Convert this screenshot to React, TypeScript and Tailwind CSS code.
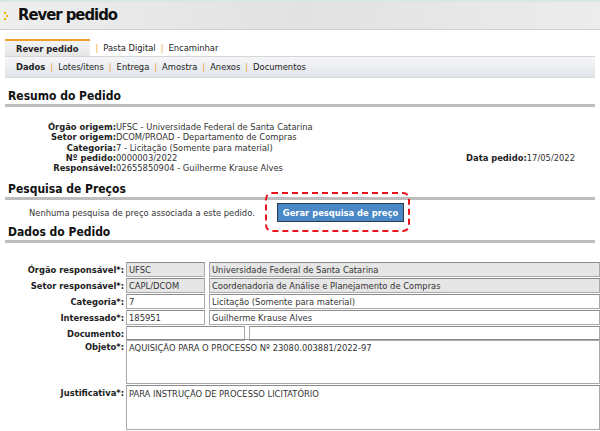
import { ReactNode } from "react";

const font = {
  fontFamily: '"DejaVu Sans Condensed", "DejaVu Sans", Verdana, sans-serif',
  fontStretch: "condensed",
};

const Sep = () => <span className="px-[5px] text-[#f0a030]">|</span>;

const SectionTitle = ({ children }: { children: ReactNode }) => (
  <div className="mx-[5px] border-b-[3px] border-[#bdbdbd] pl-[3px] text-[12px] font-bold leading-[16px] text-[#111]">
    {children}
  </div>
);

const SummaryRow = ({ label, value, extra }: { label: string; value: string; extra?: ReactNode }) => (
  <div className="flex h-[10.3px] items-center leading-[10.3px]">
    <span className="w-[116px] shrink-0 text-right font-bold text-[#222]">{label}:</span>
    <span className="text-[#333]">{value}</span>
    {extra}
  </div>
);

const Field = ({ value, gray, className }: { value?: string; gray?: boolean; className?: string }) => (
  <div
    className={
      "h-[15px] border border-[#a9a9a9] border-t-[#8a8a8a] pl-[2px] leading-[13px] text-[#333] " +
      (gray ? "bg-[#e6e6e6] " : "bg-white ") +
      (className ?? "")
    }
  >
    {value}
  </div>
);

const FormRow = ({ label, children, h = "h-[16px]" }: { label: string; children: ReactNode; h?: string }) => (
  <div className={"flex items-start " + h}>
    <span className="w-[124px] shrink-0 pt-[1px] text-right font-bold text-[#222]">{label}</span>
    <div className="flex flex-1 gap-[4px] pl-[2px]">{children}</div>
  </div>
);

export default function App() {
  return (
    <div className="relative h-[431px] w-[600px] overflow-hidden bg-white text-[9.3px]" style={font}>
      {/* header */}
      <div className="flex h-[30px] items-center border-t-2 border-b border-t-[#d6e9e2] border-b-[#cfcfcf] bg-gradient-to-r from-[#eeeeee] via-[#e2e2e2] to-[#ececec]">
        <svg width="6" height="8" viewBox="0 0 6 8" className="ml-[4px] mr-[8px]">
          <rect x="0" y="0" width="2" height="2" fill="#f0b400" />
          <rect x="2" y="3" width="2" height="2" fill="#f0b400" />
          <rect x="0" y="6" width="2" height="2" fill="#f0b400" />
        </svg>
        <span className="text-[16.5px] font-bold tracking-[-1px] text-[#111]">Rever pedido</span>
      </div>

      {/* tabs */}
      <div className="mt-[9px] flex h-[17px] items-end pl-[5px] text-[#222]">
        <div className="flex h-[17px] items-center border-t-2 border-[#f0a030] bg-gradient-to-b from-[#f4f4f4] to-[#e6e6e6] px-[11px] font-bold">
          Rever pedido
        </div>
        <div className="flex h-[17px] items-center pl-[1px]">
          <Sep />
          Pasta Digital
          <Sep />
          Encaminhar
        </div>
      </div>
      <div className="mx-[5px] flex h-[22px] items-center border-y border-[#d5d5d5] bg-gradient-to-b from-[#f5f6f8] to-[#e1e5e9] pl-[11px] text-[#222]">
        <span className="font-bold">Dados</span>
        <Sep />
        Lotes/itens
        <Sep />
        Entrega
        <Sep />
        Amostra
        <Sep />
        Anexos
        <Sep />
        Documentos
      </div>

      {/* resumo */}
      <div className="mt-[10px]">
        <SectionTitle>Resumo do Pedido</SectionTitle>
      </div>
      <div className="mt-[15px] flex flex-col">
        <SummaryRow label="Órgão origem" value="UFSC - Universidade Federal de Santa Catarina" />
        <SummaryRow label="Setor origem" value="DCOM/PROAD - Departamento de Compras" />
        <SummaryRow label="Categoria" value="7 - Licitação (Somente para material)" />
        <SummaryRow
          label="Nº pedido"
          value="0000003/2022"
          extra={
            <span className="ml-auto pr-[25px] text-[#333]">
              <b className="text-[#222]">Data pedido:</b>17/05/2022
            </span>
          }
        />
        <SummaryRow label="Responsável" value="02655850904 - Guilherme Krause Alves" />
      </div>

      {/* pesquisa */}
      <div className="mt-[8px]">
        <SectionTitle>Pesquisa de Preços</SectionTitle>
      </div>
      <div className="flex h-[24px] items-center">
        <span className="ml-[29px] text-[#333]">Nenhuma pesquisa de preço associada a este pedido.</span>
        <button className="ml-[22px] h-[19px] border border-[#2a3a4a] bg-[#4a88c6] px-[5px] text-[9.3px] font-bold text-white">
          Gerar pesquisa de preço
        </button>
      </div>
      <SectionTitle>Dados do Pedido</SectionTitle>

      {/* annotation */}
      <div className="absolute left-[265px] top-[192px] h-[40px] w-[145px] rounded-[7px] border-[2.5px] border-dashed border-[#e8141c]" />

      {/* form */}
      <div className="mt-[19px] flex flex-col">
        <FormRow label="Órgão responsável*:">
          <Field value="UFSC" gray className="w-[79px] shrink-0" />
          <Field value="Universidade Federal de Santa Catarina" gray className="flex-1" />
        </FormRow>
        <FormRow label="Setor responsável*:">
          <Field value="CAPL/DCOM" gray className="w-[79px] shrink-0" />
          <Field value="Coordenadoria de Análise e Planejamento de Compras" gray className="flex-1" />
        </FormRow>
        <FormRow label="Categoria*:">
          <Field value="7" className="w-[79px] shrink-0" />
          <Field value="Licitação (Somente para material)" className="flex-1" />
        </FormRow>
        <FormRow label="Interessado*:">
          <Field value="185951" className="w-[79px] shrink-0" />
          <Field value="Guilherme Krause Alves" className="flex-1" />
        </FormRow>
        <FormRow label="Documento:" h="h-[13px]">
          <Field className="w-[119px] shrink-0" />
          <Field className="flex-1" />
        </FormRow>
        <FormRow label="Objeto*:" h="h-[46px]">
          <div className="h-[45px] flex-1 border border-[#a9a9a9] border-t-[#8a8a8a] pl-[2px] pt-[1px] text-[#333]">
            AQUISIÇÃO PARA O PROCESSO Nº 23080.003881/2022-97
          </div>
        </FormRow>
        <FormRow label="Justificativa*:" h="h-[46px]">
          <div className="h-[45px] flex-1 border border-[#a9a9a9] border-t-[#8a8a8a] pl-[2px] pt-[1px] text-[#333]">
            PARA INSTRUÇÃO DE PROCESSO LICITATÓRIO
          </div>
        </FormRow>
      </div>
    </div>
  );
}
